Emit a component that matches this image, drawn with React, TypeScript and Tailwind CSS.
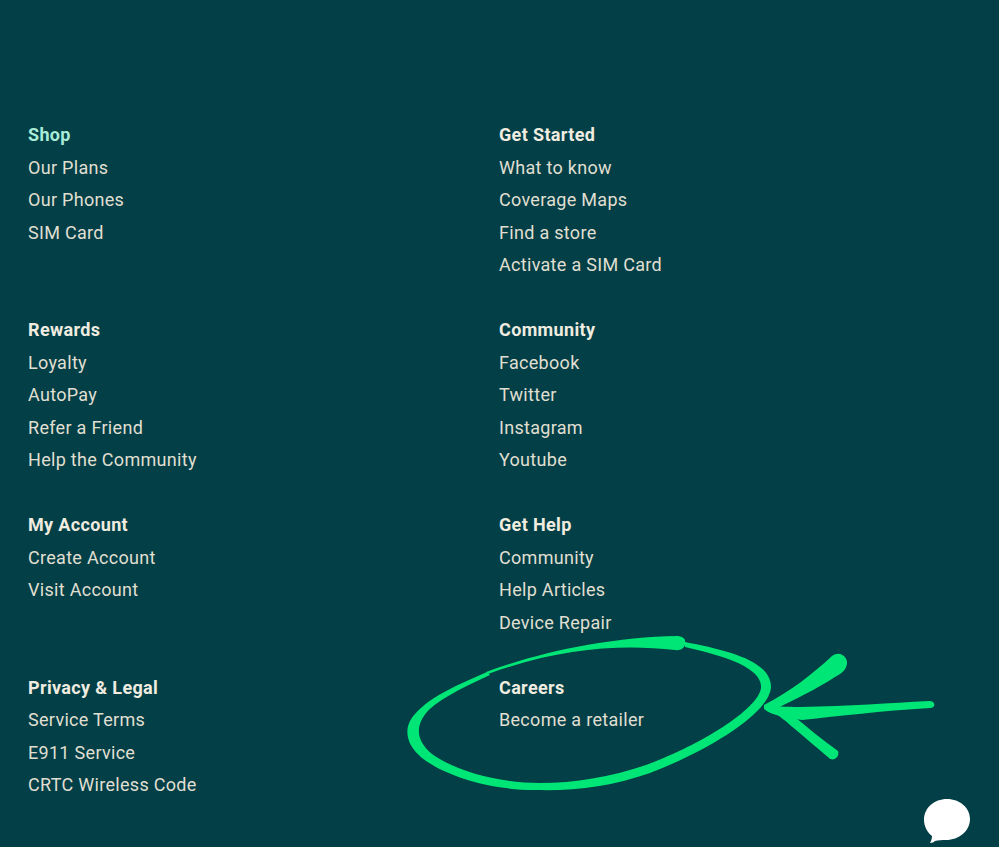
const sections = [
  { title: "Shop", accent: true, links: ["Our Plans", "Our Phones", "SIM Card"] },
  { title: "Get Started", links: ["What to know", "Coverage Maps", "Find a store", "Activate a SIM Card"] },
  { title: "Rewards", links: ["Loyalty", "AutoPay", "Refer a Friend", "Help the Community"] },
  { title: "Community", links: ["Facebook", "Twitter", "Instagram", "Youtube"] },
  { title: "My Account", links: ["Create Account", "Visit Account"] },
  { title: "Get Help", links: ["Community", "Help Articles", "Device Repair"] },
  { title: "Privacy & Legal", links: ["Service Terms", "E911 Service", "CRTC Wireless Code"] },
  { title: "Careers", links: ["Become a retailer"] },
];

function Annotation() {
  return (
    <svg className="absolute left-0 top-0 pointer-events-none" width="999" height="847" viewBox="0 0 999 847" fill="none">
      <g fill="#00e676">
        {/* marker circle */}
        <path d="M685 642 C 725 650 772 660 771 688 C 768 715 705 752 650 773 C 610 787 575 791 535 790 C 490 790 445 776 422 758 C 405 744 403 727 415 714 C 432 695 460 684 487 672 L 490 675 C 464 687 439 699 427 712 C 415 726 416 741 432 754 C 452 769 495 783 540 783 C 575 783 610 777 646 765 C 698 746 758 710 761 688 C 763 668 725 656 685 647 Z" />
        <path d="M486 672 C 540 652 610 637 678 636 Q 687 637 685 645 Q 683 651 675 650 C 620 644 560 648 488 674 Z" />
        {/* arrow */}
        <path d="M764 705 C 790 692 815 672 832 656 C 840 650 848 657 847 664 C 846 670 842 673 835 677 C 815 690 795 699 778 708 Z" />
        <path d="M764 705 C 775 706 785 707 800 707 C 850 706 890 703 929 701 C 936 701 936 708 930 708 C 880 711 840 716 802 720 C 790 718 772 716 764 709 Z" />
        <path d="M775 713 L 795 717 C 808 728 824 741 838 751 C 840 757 833 762 829 758 C 815 746 801 734 790 725 C 785 720 780 717 775 713 Z" />
      </g>
      {/* chat bubble */}
      <path
        fill="#ffffff"
        d="M947 799 C 960 799 970 808 970 819 C 970 831 959 840 946 840 C 942 840 938 840 935 841 C 934 842 932 843 930 843 C 931 841 932 839 932 836 C 928 833 924 827 924 820 C 924 808 934 799 947 799 Z"
      />
    </svg>
  );
}

export default function App() {
  return (
    <div className="relative w-[999px] h-[847px] overflow-hidden bg-[#023f46] font-['Roboto',sans-serif]">
      <div className="grid grid-cols-[471px_1fr] gap-y-[32.5px] pl-[28px] pt-[119px]">
        {sections.map((s) => (
          <div key={s.title}>
            <h3 className={`text-[18px] leading-[32.5px] font-bold tracking-[0.35px] ${s.accent ? "text-[#a8ecd8]" : "text-[#f0ece0]"}`}>{s.title}</h3>
            {s.links.map((l) => (
              <a key={l} className="block text-[18px] leading-[32.5px] tracking-[0.3px] text-[#e0dfd2]">{l}</a>
            ))}
          </div>
        ))}
      </div>
      <Annotation />
    </div>
  );
}
